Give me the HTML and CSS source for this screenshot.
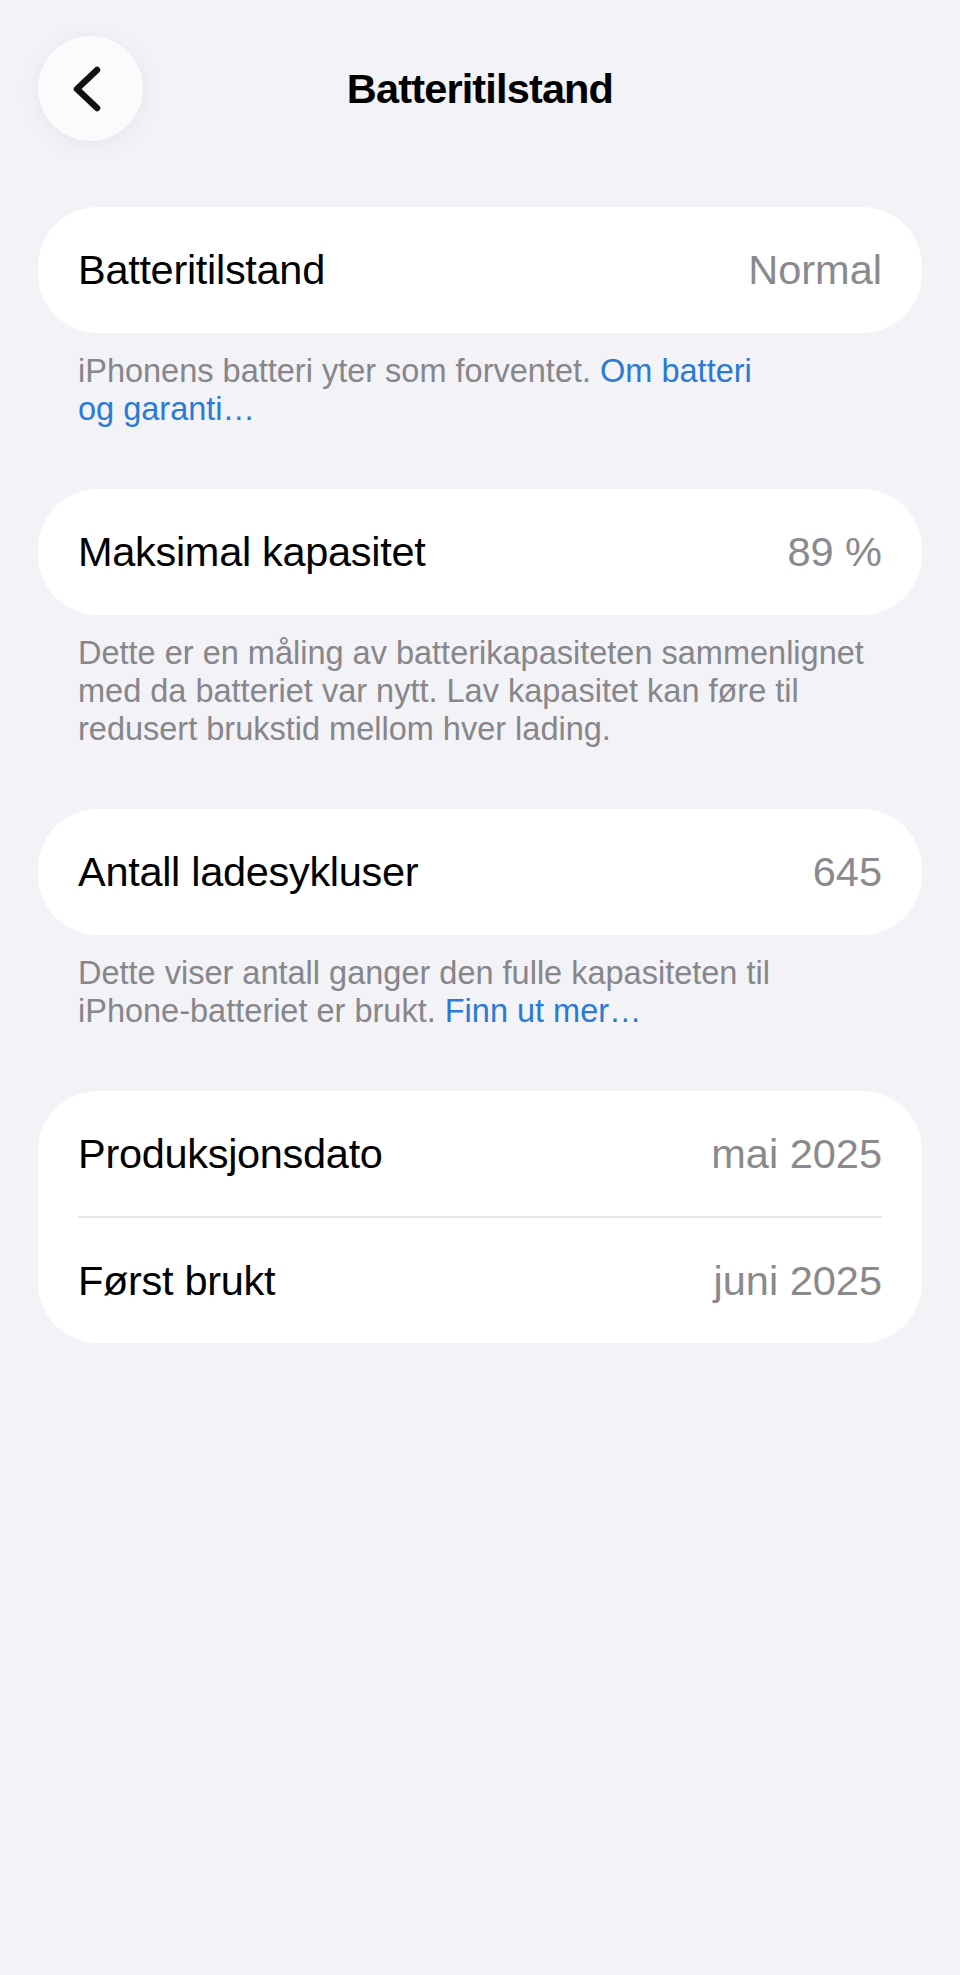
FILE: index.html
```html
<!DOCTYPE html>
<html lang="nb">
<head>
<meta charset="utf-8">
<title>Batteritilstand</title>
<link rel="stylesheet" href="styles.css">
</head>
<body>
<div class="page">
  <header class="nav">
    <button class="back" aria-label="Tilbake">
      <svg class="back-icon" viewBox="0 0 105 105" width="105" height="105" aria-hidden="true">
        <path d="M59 34 L39 53 L59 72" fill="none" stroke="#111" stroke-width="6.5" stroke-linecap="round" stroke-linejoin="round"/>
      </svg>
    </button>
    <h1 class="title">Batteritilstand</h1>
    <span class="nav-spacer"></span>
  </header>

  <main class="sections">
    <section class="group">
      <div class="card">
        <div class="row"><span class="label">Batteritilstand</span><span class="value">Normal</span></div>
      </div>
      <p class="footer">iPhonens batteri yter som forventet. <a class="link" href="#">Om batteri<br>og garanti…</a></p>
    </section>

    <section class="group">
      <div class="card">
        <div class="row"><span class="label">Maksimal kapasitet</span><span class="value">89 %</span></div>
      </div>
      <p class="footer">Dette er en måling av batterikapasiteten sammenlignet<br>med da batteriet var nytt. Lav kapasitet kan føre til<br>redusert brukstid mellom hver lading.</p>
    </section>

    <section class="group">
      <div class="card">
        <div class="row"><span class="label">Antall ladesykluser</span><span class="value">645</span></div>
      </div>
      <p class="footer">Dette viser antall ganger den fulle kapasiteten til<br>iPhone-batteriet er brukt. <a class="link" href="#">Finn ut mer…</a></p>
    </section>

    <section class="group">
      <div class="card">
        <div class="row"><span class="label">Produksjonsdato</span><span class="value">mai 2025</span></div>
        <div class="sep"></div>
        <div class="row"><span class="label">Først brukt</span><span class="value">juni 2025</span></div>
      </div>
    </section>
  </main>
</div>
</body>
</html>
```

FILE: styles.css
```css
* {
  box-sizing: border-box;
}

html, body {
  margin: 0;
  padding: 0;
  background: #f2f2f7;
}

body {
  font-family: "Liberation Sans", Arial, sans-serif;
  color: #000;
  min-height: 1975px;
}

.page {
  padding: 36px 38px 0;
}

.nav {
  display: grid;
  grid-template-columns: 105px 1fr 105px;
  align-items: center;
}

.back {
  width: 105px;
  height: 105px;
  border: none;
  padding: 0;
  margin: 0;
  border-radius: 50%;
  background: #fbfbfd;
  box-shadow: 0 3px 22px rgba(0, 0, 0, 0.06);
  display: flex;
  align-items: center;
  justify-content: center;
}

.back-icon {
  display: block;
}

.title {
  margin: 0;
  text-align: center;
  font-size: 41.5px;
  font-weight: 700;
  letter-spacing: -0.85px;
  line-height: 1.15;
}

.sections {
  margin-top: 66px;
  display: flex;
  flex-direction: column;
  gap: 61px;
}

.card {
  background: #fff;
  border-radius: 60px;
}

.row {
  height: 126px;
  padding: 0 40px;
  display: flex;
  align-items: center;
  justify-content: space-between;
}

.card .sep + .row,
.card .row:has(+ .sep) {
  height: 125px;
}

.sep {
  height: 2px;
  margin: 0 40px;
  background: #e4e4e9;
}

.label {
  font-size: 41.5px;
  letter-spacing: -0.3px;
  color: #000;
}

.value {
  font-size: 41.5px;
  color: #8a8a8e;
}

.footer {
  margin: 19px 0 0;
  padding: 0 40px;
  font-size: 32.5px;
  line-height: 38px;
  color: #86868b;
}

.link {
  color: #2a7ad5;
  text-decoration: none;
}
```
